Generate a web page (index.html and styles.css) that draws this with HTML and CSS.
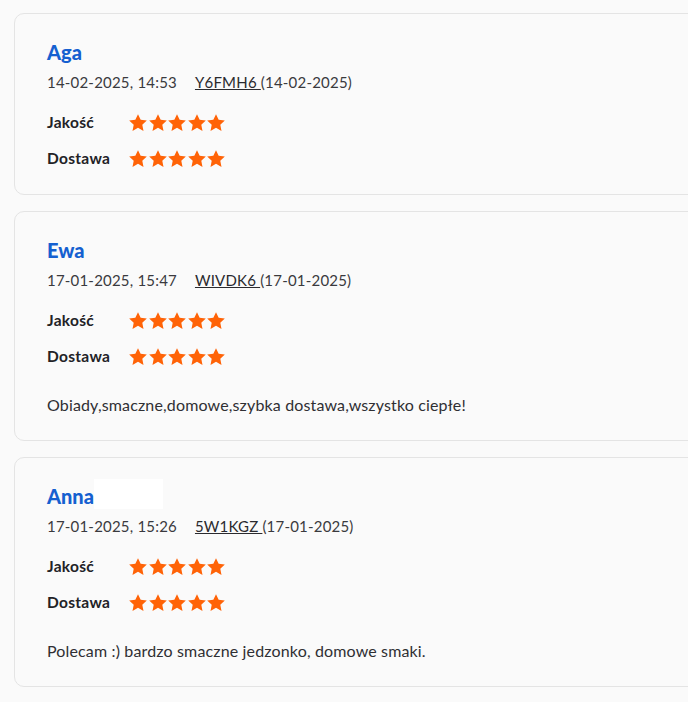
FILE: index.html
```html
<!DOCTYPE html>
<html lang="pl">
<head>
<meta charset="utf-8">
<link rel="stylesheet" href="styles.css">
</head>
<body>
<svg width="0" height="0" class="defs">
  <defs>
    <symbol id="star" viewBox="1 1 22 21">
      <path d="M12 1.2l3.3 7 7.6.9-5.6 5.2 1.5 7.6L12 18.1l-6.8 3.8 1.5-7.6L1.1 9.1l7.6-.9z"/>
    </symbol>
  </defs>
</svg>
<div class="list">
  <div class="card">
    <div class="name">Aga</div>
    <div class="meta"><span class="date">14-02-2025, 14:53</span><span class="order"><a class="code">Y6FMH6 </a>(14-02-2025)</span></div>
    <div class="ratings">
      <div class="rating"><span class="label">Jakość</span><span class="stars"><svg><use href="#star"/></svg><svg><use href="#star"/></svg><svg><use href="#star"/></svg><svg><use href="#star"/></svg><svg><use href="#star"/></svg></span></div>
      <div class="rating"><span class="label">Dostawa</span><span class="stars"><svg><use href="#star"/></svg><svg><use href="#star"/></svg><svg><use href="#star"/></svg><svg><use href="#star"/></svg><svg><use href="#star"/></svg></span></div>
    </div>
  </div>
  <div class="card">
    <div class="name">Ewa</div>
    <div class="meta"><span class="date">17-01-2025, 15:47</span><span class="order"><a class="code">WIVDK6 </a>(17-01-2025)</span></div>
    <div class="ratings">
      <div class="rating"><span class="label">Jakość</span><span class="stars"><svg><use href="#star"/></svg><svg><use href="#star"/></svg><svg><use href="#star"/></svg><svg><use href="#star"/></svg><svg><use href="#star"/></svg></span></div>
      <div class="rating"><span class="label">Dostawa</span><span class="stars"><svg><use href="#star"/></svg><svg><use href="#star"/></svg><svg><use href="#star"/></svg><svg><use href="#star"/></svg><svg><use href="#star"/></svg></span></div>
    </div>
    <p class="comment">Obiady,smaczne,domowe,szybka dostawa,wszystko ciepłe!</p>
  </div>
  <div class="card">
    <div class="name">Anna<span class="mask"></span></div>
    <div class="meta"><span class="date">17-01-2025, 15:26</span><span class="order"><a class="code">5W1KGZ </a>(17-01-2025)</span></div>
    <div class="ratings">
      <div class="rating"><span class="label">Jakość</span><span class="stars"><svg><use href="#star"/></svg><svg><use href="#star"/></svg><svg><use href="#star"/></svg><svg><use href="#star"/></svg><svg><use href="#star"/></svg></span></div>
      <div class="rating"><span class="label">Dostawa</span><span class="stars"><svg><use href="#star"/></svg><svg><use href="#star"/></svg><svg><use href="#star"/></svg><svg><use href="#star"/></svg><svg><use href="#star"/></svg></span></div>
    </div>
    <p class="comment">Polecam :) bardzo smaczne jedzonko, domowe smaki.</p>
  </div>
</div>
</body>
</html>
```
FILE: styles.css
```css
html, body {
  margin: 0;
  padding: 0;
  background: #fafafa;
  overflow: hidden;
}
body {
  font-family: Lato, "Open Sans", sans-serif;
  color: #2f2f33;
}
.defs { position: absolute; }
.list {
  display: flex;
  flex-direction: column;
  gap: 16px;
  padding: 13px 0 0 14px;
}
.card {
  width: 720px;
  border: 1px solid #e4e4e4;
  border-radius: 10px;
  background: #fafafa;
  padding: 24px 32px 25px;
}
.name {
  display: flex;
  align-items: center;
  height: 28px;
  font-size: 20px;
  font-weight: 900;
  line-height: 28px;
  color: #1560d0;
}
.mask {
  display: inline-block;
  width: 69px;
  height: 30px;
  margin-top: -4px;
  background: #ffffff;
}
.meta {
  margin-top: 5px;
  display: flex;
  gap: 18px;
  font-size: 15px;
  line-height: 22px;
  color: #3a3a3e;
  letter-spacing: 0.2px;
}
.code {
  color: #2a2a2e;
  text-decoration: underline;
  white-space: pre;
}
.ratings {
  margin-top: 18px;
  display: flex;
  flex-direction: column;
  gap: 14px;
}
.rating {
  display: flex;
  align-items: center;
  line-height: 22px;
}
.label {
  width: 82px;
  font-size: 15.5px;
  font-weight: 700;
  letter-spacing: 0.3px;
  color: #222226;
}
.stars {
  display: flex;
  gap: 1.5px;
}
.stars svg {
  width: 18px;
  height: 17px;
  fill: #ff6307;
}
.comment {
  margin: 27px 0 -1px;
  font-size: 16px;
  letter-spacing: 0.15px;
  line-height: 22px;
  color: #2f2f33;
}
```
